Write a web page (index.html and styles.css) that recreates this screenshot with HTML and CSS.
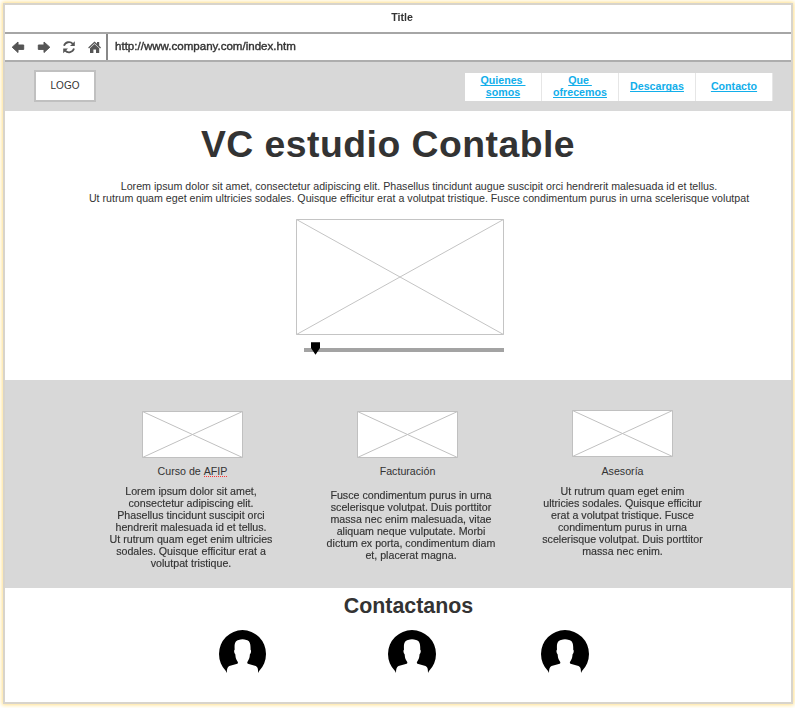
FILE: index.html
```html
<!DOCTYPE html>
<html lang="es">
<head>
<meta charset="utf-8">
<title>VC estudio Contable</title>
<link rel="stylesheet" href="styles.css">
</head>
<body>
<div class="window">
  <div class="titlebar soft">Title</div>
  <div class="toolbar">
    <div class="controls soft">
      <svg viewBox="0 0 14 14"><path class="arrow" d="M1.2 7.2 7 2V5H12.7V9.4H7V12.5Z"/></svg>
      <svg viewBox="0 0 14 14"><path class="arrow" d="M12.8 7.2 7 2V5H1.3V9.4H7V12.5Z"/></svg>
      <svg viewBox="0 0 14 14"><path class="stroke" d="M2 5.8A5.2 5.2 0 0 1 10.8 3.8M12 8.6A5.2 5.2 0 0 1 3.2 10.6"/><path d="M12.8 1.2V6H8Z M1.2 13.2V8.4H6Z"/></svg>
      <svg viewBox="0 0 14 14"><path d="M.2 7.4 6.5 1.6 9 3.8V2H11.2V5.7L13 7.4 12.2 8.4 6.5 3.3 1 8.4Z M2 8.3 6.5 4.1 11.2 8.3V13H8V9.4H5.4V13H2Z"/></svg>
    </div>
    <div class="address soft">http://www.company.com/index.htm</div>
  </div>
  <header class="header">
    <div class="logo">LOGO</div>
    <nav class="nav">
      <a href="#">Quienes&nbsp;<br>somos</a>
      <a href="#">Que&nbsp;<br>ofrecemos</a>
      <a href="#">Descargas</a>
      <a href="#">Contacto</a>
    </nav>
  </header>
  <section class="hero">
    <h1>VC estudio Contable</h1>
    <p>Lorem ipsum dolor sit amet, consectetur adipiscing elit. Phasellus tincidunt augue suscipit orci hendrerit malesuada id et tellus.<br>Ut rutrum quam eget enim ultricies sodales. Quisque efficitur erat a volutpat tristique. Fusce condimentum purus in urna scelerisque volutpat</p>
    <svg class="picture" viewBox="0 0 208 116"><path d="M.5.5H207.5V115.5H.5ZL207.5 115.5M207.5.5 .5 115.5"/></svg>
    <div class="slider"><svg class="thumb" viewBox="0 0 9 13"><path d="M0 .2H9V6L4.5 12.8 0 6Z"/></svg></div>
  </section>
  <section class="services">
    <article class="service">
      <svg class="thumbnail" viewBox="0 0 101 47"><path d="M.5.5H100.5V46.5H.5ZL100.5 46.5M100.5.5 .5 46.5"/></svg>
      <h3>Curso de <span class="misspelled">AFIP</span></h3>
      <p class="soft">Lorem ipsum dolor sit amet,<br>consectetur adipiscing elit.<br>Phasellus tincidunt suscipit orci<br>hendrerit malesuada id et tellus.<br>Ut rutrum quam eget enim ultricies<br>sodales. Quisque efficitur erat a<br>volutpat tristique.</p>
    </article>
    <article class="service billing">
      <svg class="thumbnail" viewBox="0 0 101 47"><path d="M.5.5H100.5V46.5H.5ZL100.5 46.5M100.5.5 .5 46.5"/></svg>
      <h3>Facturación</h3>
      <p class="soft">Fusce condimentum purus in urna<br>scelerisque volutpat. Duis porttitor<br>massa nec enim malesuada, vitae<br>aliquam neque vulputate. Morbi<br>dictum ex porta, condimentum diam<br>et, placerat magna.</p>
    </article>
    <article class="service advice">
      <svg class="thumbnail" viewBox="0 0 101 47"><path d="M.5.5H100.5V46.5H.5ZL100.5 46.5M100.5.5 .5 46.5"/></svg>
      <h3>Asesoría</h3>
      <p class="soft">Ut rutrum quam eget enim<br>ultricies sodales. Quisque efficitur<br>erat a volutpat tristique. Fusce<br>condimentum purus in urna<br>scelerisque volutpat. Duis porttitor<br>massa nec enim.</p>
    </article>
  </section>
  <footer class="contact">
    <h2>Contactanos</h2>
    <div class="people">
      <svg viewBox="0 0 48 44" preserveAspectRatio="none"><path d="M8 44L7 42A24 24 0 1 1 41 42L40 44C40 39.5 39.5 38 37.5 37L29.5 34.8Q28.5 34.3 29 33C31 30 31.5 27.5 31.5 25.5Q33 24 32.7 21.5L32.2 20.5C32.5 14 31 11.5 28 11Q24 9.5 20 11C17 11.5 15.5 14 16 20.5L15.5 21.5Q15.2 24 16.7 25.5C16.8 27.5 17 30 19.2 33Q19.7 34.3 18.7 34.8L10.5 37C8.5 38 8 40 8 44Z"/></svg>
      <svg viewBox="0 0 48 44" preserveAspectRatio="none"><path d="M8 44L7 42A24 24 0 1 1 41 42L40 44C40 39.5 39.5 38 37.5 37L29.5 34.8Q28.5 34.3 29 33C31 30 31.5 27.5 31.5 25.5Q33 24 32.7 21.5L32.2 20.5C32.5 14 31 11.5 28 11Q24 9.5 20 11C17 11.5 15.5 14 16 20.5L15.5 21.5Q15.2 24 16.7 25.5C16.8 27.5 17 30 19.2 33Q19.7 34.3 18.7 34.8L10.5 37C8.5 38 8 40 8 44Z"/></svg>
      <svg viewBox="0 0 48 44" preserveAspectRatio="none"><path d="M8 44L7 42A24 24 0 1 1 41 42L40 44C40 39.5 39.5 38 37.5 37L29.5 34.8Q28.5 34.3 29 33C31 30 31.5 27.5 31.5 25.5Q33 24 32.7 21.5L32.2 20.5C32.5 14 31 11.5 28 11Q24 9.5 20 11C17 11.5 15.5 14 16 20.5L15.5 21.5Q15.2 24 16.7 25.5C16.8 27.5 17 30 19.2 33Q19.7 34.3 18.7 34.8L10.5 37C8.5 38 8 40 8 44Z"/></svg>
    </div>
  </footer>
</div>
</body>
</html>
```
FILE: styles.css
```css
* { box-sizing: border-box; margin: 0; }
body {
  height: 708px;
  padding: 3px;
  background: #fff;
  color: #333;
  font: 10.67px/12px "Liberation Sans", Arial, sans-serif;
  overflow: hidden;
}
svg { display: block; flex: none; }
h3 { font: inherit; }
.window {
  width: 790px;
  height: 701px;
  border: 2px solid #d8d4cc;
  box-shadow: 0 0 4px 1px #ffe08a;
}
.soft { filter: blur(.4px); }
.titlebar {
  height: 27px;
  padding: 6px 0 0 8px;
  text-align: center;
  font-weight: bold;
  white-space: nowrap;
}
.toolbar {
  display: flex;
  height: 30px;
  border-top: 2px solid #a6a6a6;
  border-bottom: 2px solid #adadad;
}
.controls {
  display: flex;
  align-items: center;
  gap: 11.5px;
  width: 103px;
  padding-left: 6px;
  border-right: 2px solid #888;
}
.controls svg { width: 14px; height: 14px; fill: #555; }
.controls .arrow { stroke: #555; stroke-width: 1; stroke-linejoin: round; }
.controls .stroke { fill: none; stroke: #555; stroke-width: 1.8; }
.address { padding: 6px 0 0 7px; font-size: 11.55px; -webkit-text-stroke: .4px #333; }
.header {
  display: flex;
  justify-content: space-between;
  height: 49px;
  padding: 8px 18px 0 29px;
  background: #d8d8d8;
}
.logo {
  width: 62px;
  height: 32px;
  border: 2px solid #c0c0c0;
  background: #fff;
  text-align: center;
  line-height: 28px;
  font-size: 10px;
}
.nav { display: flex; margin-top: 3px; height: 28px; background: #fff; }
.nav a {
  display: flex;
  align-items: center;
  justify-content: center;
  width: 77px;
  padding-bottom: 2px;
  border-right: 1px solid #e6e6e6;
  color: #12aeea;
  font-weight: bold;
  text-align: center;
  text-decoration-skip-ink: none;
}
.hero {
  display: flex;
  flex-direction: column;
  align-items: center;
  height: 269px;
  padding-top: 11px;
}
h1 { margin-right: 20px; font-size: 37.33px; line-height: 44px; letter-spacing: .48px; white-space: nowrap; }
.hero p { margin: 14px 0 0 42px; text-align: center; white-space: nowrap; }
.picture { width: 208px; height: 116px; margin: 15px 0 0 4px; fill: #fff; stroke: #c4c4c4; }
.slider { width: 200px; height: 4px; margin: 13px 0 0 12px; background: #a3a3a3; }
.thumb { width: 9px; height: 13px; margin: -6px 0 0 7px; }
.services { display: flex; height: 208px; padding: 31px 0 0 80px; background: #d8d8d8; }
.service { display: flex; flex-direction: column; align-items: center; width: 215px; text-align: center; }
.thumbnail { width: 101px; height: 47px; fill: #fff; stroke: #c0c0c0; }
.advice .thumbnail { margin: -1px 0 1px; }
.service h3 { margin-top: 7px; }
.service p { margin: 8px 3px 0 0; -webkit-text-stroke: .15px #333; white-space: nowrap; }
.billing p { margin: 12px 0 0 7px; }
.advice p { margin: 8px 0 0; }
.misspelled { display: inline-block; height: 12px; border-bottom: 1px dotted #f33; }
.contact { height: 114px; padding-top: 5px; }
h2 { padding-left: 21px; text-align: center; font-size: 21.4px; line-height: 26px; }
.people { display: flex; padding: 10px 0 0 214px; }
.people svg { width: 48px; height: 44px; }
.people svg:nth-child(1) { width: 47px; margin-right: 122px; }
.people svg:nth-child(2) { margin-right: 105px; }
```
